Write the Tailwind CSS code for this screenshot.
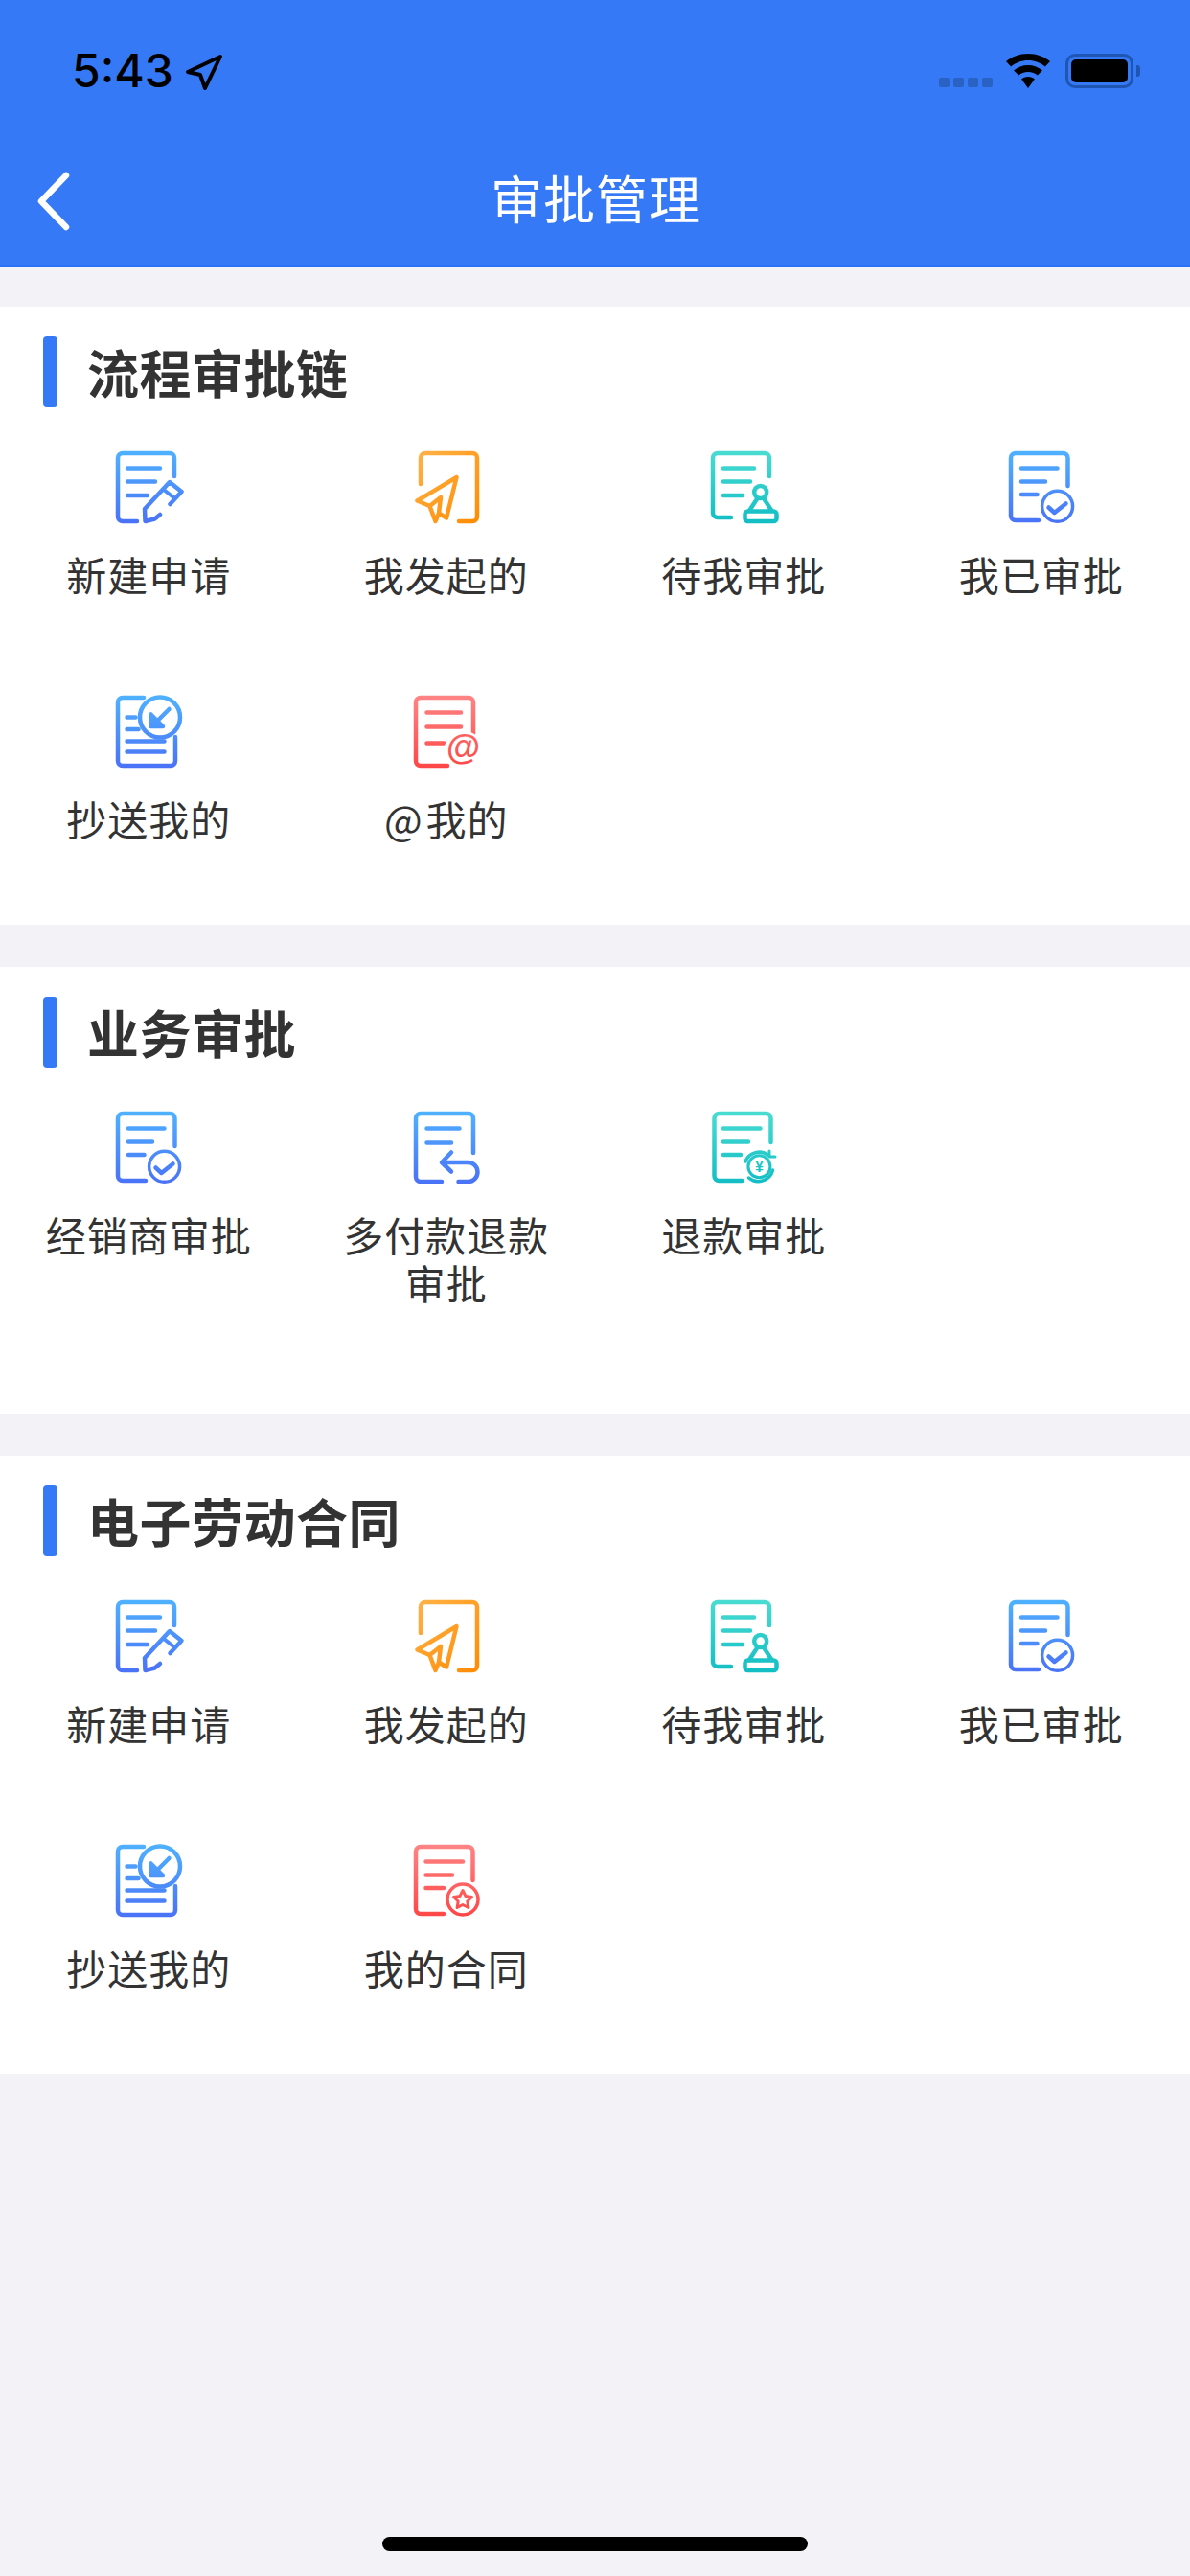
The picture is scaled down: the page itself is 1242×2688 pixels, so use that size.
<!DOCTYPE html>
<html lang="en">
<head>
    <meta charset="UTF-8">
    <meta name="viewport" content="width=device-width, initial-scale=1.0">
    <title>审批管理</title>
    <script src="https://cdn.jsdelivr.net/npm/@tailwindcss/browser@4"></script>
</head>
<body class="relative w-[1242px] h-[2688px] overflow-hidden bg-[#f2f2f7] font-['Noto_Sans_CJK_SC',sans-serif]">

    <!-- Shared gradients and icons -->
    <svg class="absolute w-0 h-0" aria-hidden="true">
        <defs>
            <linearGradient id="blue" gradientUnits="userSpaceOnUse" x1="0" y1="0" x2="0" y2="76"><stop offset="0" stop-color="#4fb2ff"/><stop offset="1" stop-color="#4a72f7"/></linearGradient>
            <linearGradient id="orange" gradientUnits="userSpaceOnUse" x1="0" y1="0" x2="76" y2="76"><stop offset="0" stop-color="#ffb54d"/><stop offset="1" stop-color="#ff8a00"/></linearGradient>
            <linearGradient id="teal" gradientUnits="userSpaceOnUse" x1="0" y1="0" x2="0" y2="76"><stop offset="0" stop-color="#4adcd2"/><stop offset="1" stop-color="#12bec4"/></linearGradient>
            <linearGradient id="red" gradientUnits="userSpaceOnUse" x1="0" y1="0" x2="0" y2="76"><stop offset="0" stop-color="#ff8585"/><stop offset="1" stop-color="#ff4646"/></linearGradient>

            <symbol id="i-new" viewBox="0 0 78 78">
                <g fill="none" stroke="url(#blue)" stroke-width="4.500" stroke-linecap="round" stroke-linejoin="round">
                    <path d="M66 27V8a5 5 0 0 0-5-5H12a5 5 0 0 0-5 5v61a5 5 0 0 0 5 5h15"/>
                    <path d="M17 18.500h34M17 32.500h29M17 47h21"/>
                    <path d="M61.500 56 73.500 43 61 33 35 61l.5 13 10-2.500 5.500-4.500"/>
                    <path d="M55 41l10 8" stroke-width="4"/>
                </g>
            </symbol>
            <symbol id="i-sent" viewBox="0 0 78 78">
                <g fill="none" stroke="url(#orange)" stroke-width="4.500" stroke-linecap="round" stroke-linejoin="round">
                    <path d="M12 35V8a5 5 0 0 1 5-5h49a5 5 0 0 1 5 5v61a5 5 0 0 1-5 5H52"/>
                    <path d="M49.500 28 8.500 52.500 21.500 58 27.500 74 31 65.500 39 70.500Z"/>
                    <path d="M21.500 58 33 49 31 65.500"/>
                </g>
            </symbol>
            <symbol id="i-pending" viewBox="0 0 78 78">
                <g fill="none" stroke="url(#teal)" stroke-width="4.500" stroke-linecap="round" stroke-linejoin="round">
                    <path d="M66 27V8a5 5 0 0 0-5-5H12a5 5 0 0 0-5 5v57a5 5 0 0 0 5 5h14"/>
                    <path d="M18 18.500h32M18 32.500h28M18 47h20"/>
                    <circle cx="56.700" cy="43.500" r="6.500"/>
                    <path d="M53.500 50 45 63M60 50l8.500 13"/>
                    <rect x="40.500" y="63.500" width="33" height="10.500" rx="3"/>
                </g>
            </symbol>
            <symbol id="i-done" viewBox="0 0 78 78">
                <g fill="none" stroke="url(#blue)" stroke-width="4.500" stroke-linecap="round" stroke-linejoin="round">
                    <path d="M66.500 37V8a5 5 0 0 0-5-5H12a5 5 0 0 0-5 5v60a5 5 0 0 0 5 5h24"/>
                    <path d="M18 18.500h37.500M18 32.500h25M18 46h16.500"/>
                    <circle cx="55.600" cy="58.300" r="16" stroke-width="3.500"/>
                    <path d="M46.500 59.500l6 5.500 12-9.500"/>
                </g>
            </symbol>
            <symbol id="i-copy" viewBox="0 0 78 78">
                <g fill="none" stroke="url(#blue)" stroke-width="4.500" stroke-linecap="round" stroke-linejoin="round">
                    <path d="M34 3H12a5 5 0 0 0-5 5v61a5 5 0 0 0 5 5h50a5 5 0 0 0 5-5V44"/>
                    <path d="M16.500 23.500h9M16.500 36h12M16.500 48.500h39M16.500 59.500h39"/>
                    <circle cx="51" cy="23.500" r="21"/>
                    <path d="M60.500 15 46 29.500"/>
                    <path d="M41.500 20.500v12.500h12.500Z" fill="url(#blue)"/>
                </g>
            </symbol>
            <symbol id="i-at" viewBox="0 0 78 78">
                <g fill="none" stroke="url(#red)" stroke-width="4.500" stroke-linecap="round" stroke-linejoin="round">
                    <path d="M67 40V8a5 5 0 0 0-5-5H12a5 5 0 0 0-5 5v61a5 5 0 0 0 5 5h28"/>
                    <path d="M18.500 18.500h35.500M18.500 33.500h35.500M18.500 50.500h18"/>
                    <circle cx="56.600" cy="57.500" r="20" fill="#fff" stroke="none"/>
                </g>
                <text x="56.500" y="67" text-anchor="middle" font-family="Liberation Sans" font-weight="700" font-size="36" fill="url(#red)">@</text>
            </symbol>
            <symbol id="i-return" viewBox="0 0 78 78">
                <g fill="none" stroke="url(#blue)" stroke-width="4.500" stroke-linecap="round" stroke-linejoin="round">
                    <path d="M67 44V8a5 5 0 0 0-5-5H12a5 5 0 0 0-5 5v61a5 5 0 0 0 5 5h22"/>
                    <path d="M18.500 18.500h34M18.500 33.500h25.500"/>
                    <path d="M44 43.500 34 54l10 9.500M34 54h27.500a10 10 0 0 1 0 20H51.500"/>
                </g>
            </symbol>
            <symbol id="i-refund" viewBox="0 0 78 78">
                <g fill="none" stroke="url(#teal)" stroke-width="4.500" stroke-linecap="round" stroke-linejoin="round">
                    <path d="M67.500 33V8a5 5 0 0 0-5-5H13.500a5 5 0 0 0-5 5v60a5 5 0 0 0 5 5h24"/>
                    <path d="M18 18.500h38.500M18 32.500h26M18 46h18"/>
                    <circle cx="55.400" cy="58.300" r="11.500" stroke-width="3"/>
                    <path d="M41 53a15.500 15.500 0 0 1 24-6.500M69.500 62a15.500 15.500 0 0 1-25 8" stroke-width="3.500"/>
                    <path d="M66 42v6h6" stroke-width="3"/>
                </g>
                <text x="55.400" y="64" text-anchor="middle" font-family="Liberation Sans" font-weight="700" font-size="16" fill="url(#teal)">¥</text>
            </symbol>
            <symbol id="i-contract" viewBox="0 0 78 78">
                <g fill="none" stroke="url(#red)" stroke-width="4.500" stroke-linecap="round" stroke-linejoin="round">
                    <path d="M66.500 38V8a5 5 0 0 0-5-5H12a5 5 0 0 0-5 5v60a5 5 0 0 0 5 5h24"/>
                    <path d="M17.500 18.500h38.500M17.500 32.500h27.500M17.500 46h18.500"/>
                    <circle cx="56" cy="58" r="16" stroke-width="3.500"/>
                    <path d="M56 48.500l3 6 6.500 1-4.700 4.500 1.100 6.500-5.900-3-5.900 3 1.100-6.500-4.700-4.500 6.500-1z" stroke-width="3"/>
                </g>
            </symbol>
        </defs>
    </svg>

    <!-- Header -->
    <header class="h-[279px] bg-[#3579f6] border-b-2 border-[#2a72f8] flex flex-col">
        <div class="h-[138px] flex justify-between pl-[75px] pr-[52px] pt-[50px]">
            <div class="flex items-start gap-[12px] h-[48px]">
                <span class="font-['Inter',sans-serif] font-medium text-[48px] leading-[48px] text-black">5:43</span>
                <svg class="w-[40px] h-[40px] mt-[6px]" viewBox="0 0 40 40" fill="none" stroke="#000" stroke-width="4" stroke-linejoin="round"><path d="M3 19 37 3 21 36 16 22Z"/></svg>
            </div>
            <div class="flex items-start">
                <div class="flex gap-[4px] mt-[31px] mr-[14px]">
                    <span class="w-[11px] h-[10px] rounded-[2px] bg-[#2a62c4]"></span>
                    <span class="w-[11px] h-[10px] rounded-[2px] bg-[#2a62c4]"></span>
                    <span class="w-[11px] h-[10px] rounded-[2px] bg-[#2a62c4]"></span>
                    <span class="w-[11px] h-[10px] rounded-[2px] bg-[#2a62c4]"></span>
                </div>
                <svg class="w-[46px] h-[36px] mt-[6px] mr-[16px]" viewBox="0 0 40 36" preserveAspectRatio="none" fill="#000">
                    <path d="M20 0C12 0 5.500 3 0 8l4.500 5.500C8.500 9.500 14 7 20 7s11.500 2.500 15.500 6.500L40 8C34.500 3 28 0 20 0Z"/>
                    <path d="M20 12c-5 0-9.500 2-13 5.500l4.500 5C13.500 20.500 16.500 19 20 19s6.500 1.500 8.500 3.500l4.500-5C29.500 14 25 12 20 12Z"/>
                    <path d="M20 24c-2.500 0-4.500 1-6 2.500L20 36l6-9.500C24.500 25 22.500 24 20 24Z"/>
                </svg>
                <div class="flex items-center mt-[6px]">
                    <div class="w-[71px] h-[36px] rounded-[10px] border-[3px] border-[#1f56b4] p-[3px]">
                        <div class="w-full h-full rounded-[5px] bg-black"></div>
                    </div>
                    <span class="ml-[3px] w-[4px] h-[12px] rounded-r-[3px] bg-[#1f56b4]"></span>
                </div>
            </div>
        </div>
        <div class="relative flex-1 flex items-center justify-center pb-[4px]">
            <svg class="absolute left-[38px] top-[40px] w-[40px] h-[64px]" viewBox="0 0 40 64" fill="none" stroke="#fff" stroke-width="6.500" stroke-linecap="round" stroke-linejoin="round"><path d="M31 5 5 32l26 27"/></svg>
            <h1 class="text-[54px] leading-[64px] text-white tracking-[1px] pl-[2px]">审批管理</h1>
        </div>
    </header>

    <main class="flex flex-col gap-[44px] pt-[41px]">
        <!-- 流程审批链 -->
        <section class="h-[645px] bg-white">
            <div class="h-[150px] flex items-start gap-[31px] pl-[45px] pt-[31px]">
                <span class="w-[15px] h-[74px] rounded-[4px] bg-[#3579f6]"></span>
                <h2 class="text-[54px] leading-[74px] font-bold text-[#333] tracking-[0.5px]">流程审批链</h2>
            </div>
            <div class="grid grid-cols-4 auto-rows-[255px]">
                <div class="flex flex-col items-center px-[30px]"><svg class="w-[78px] h-[78px] shrink-0"><use href="#i-new"/></svg><p class="mt-[26px] text-[42px] leading-[50px] tracking-[1px] text-[#333] text-center">新建申请</p></div>
                <div class="flex flex-col items-center px-[30px]"><svg class="w-[78px] h-[78px] shrink-0"><use href="#i-sent"/></svg><p class="mt-[26px] text-[42px] leading-[50px] tracking-[1px] text-[#333] text-center">我发起的</p></div>
                <div class="flex flex-col items-center px-[30px]"><svg class="w-[78px] h-[78px] shrink-0"><use href="#i-pending"/></svg><p class="mt-[26px] text-[42px] leading-[50px] tracking-[1px] text-[#333] text-center">待我审批</p></div>
                <div class="flex flex-col items-center px-[30px]"><svg class="w-[78px] h-[78px] shrink-0"><use href="#i-done"/></svg><p class="mt-[26px] text-[42px] leading-[50px] tracking-[1px] text-[#333] text-center">我已审批</p></div>
                <div class="flex flex-col items-center px-[30px]"><svg class="w-[78px] h-[78px] shrink-0"><use href="#i-copy"/></svg><p class="mt-[26px] text-[42px] leading-[50px] tracking-[1px] text-[#333] text-center">抄送我的</p></div>
                <div class="flex flex-col items-center px-[30px]"><svg class="w-[78px] h-[78px] shrink-0"><use href="#i-at"/></svg><p class="mt-[26px] text-[42px] leading-[50px] tracking-[1px] text-[#333] text-center"><span class="mr-[3px]">@</span>我的</p></div>
            </div>
        </section>

        <!-- 业务审批 -->
        <section class="h-[466px] bg-white">
            <div class="h-[150px] flex items-start gap-[31px] pl-[45px] pt-[31px]">
                <span class="w-[15px] h-[74px] rounded-[4px] bg-[#3579f6]"></span>
                <h2 class="text-[54px] leading-[74px] font-bold text-[#333] tracking-[0.5px]">业务审批</h2>
            </div>
            <div class="grid grid-cols-4 auto-rows-[255px]">
                <div class="flex flex-col items-center px-[30px]"><svg class="w-[78px] h-[78px] shrink-0"><use href="#i-done"/></svg><p class="mt-[26px] text-[42px] leading-[50px] tracking-[1px] text-[#333] text-center">经销商审批</p></div>
                <div class="flex flex-col items-center px-[30px]"><svg class="w-[78px] h-[78px] shrink-0"><use href="#i-return"/></svg><p class="mt-[26px] text-[42px] leading-[50px] tracking-[1px] text-[#333] text-center">多付款退款审批</p></div>
                <div class="flex flex-col items-center px-[30px]"><svg class="w-[78px] h-[78px] shrink-0"><use href="#i-refund"/></svg><p class="mt-[26px] text-[42px] leading-[50px] tracking-[1px] text-[#333] text-center">退款审批</p></div>
            </div>
        </section>

        <!-- 电子劳动合同 -->
        <section class="h-[645px] bg-white">
            <div class="h-[150px] flex items-start gap-[31px] pl-[45px] pt-[31px]">
                <span class="w-[15px] h-[74px] rounded-[4px] bg-[#3579f6]"></span>
                <h2 class="text-[54px] leading-[74px] font-bold text-[#333] tracking-[0.5px]">电子劳动合同</h2>
            </div>
            <div class="grid grid-cols-4 auto-rows-[255px]">
                <div class="flex flex-col items-center px-[30px]"><svg class="w-[78px] h-[78px] shrink-0"><use href="#i-new"/></svg><p class="mt-[26px] text-[42px] leading-[50px] tracking-[1px] text-[#333] text-center">新建申请</p></div>
                <div class="flex flex-col items-center px-[30px]"><svg class="w-[78px] h-[78px] shrink-0"><use href="#i-sent"/></svg><p class="mt-[26px] text-[42px] leading-[50px] tracking-[1px] text-[#333] text-center">我发起的</p></div>
                <div class="flex flex-col items-center px-[30px]"><svg class="w-[78px] h-[78px] shrink-0"><use href="#i-pending"/></svg><p class="mt-[26px] text-[42px] leading-[50px] tracking-[1px] text-[#333] text-center">待我审批</p></div>
                <div class="flex flex-col items-center px-[30px]"><svg class="w-[78px] h-[78px] shrink-0"><use href="#i-done"/></svg><p class="mt-[26px] text-[42px] leading-[50px] tracking-[1px] text-[#333] text-center">我已审批</p></div>
                <div class="flex flex-col items-center px-[30px]"><svg class="w-[78px] h-[78px] shrink-0"><use href="#i-copy"/></svg><p class="mt-[26px] text-[42px] leading-[50px] tracking-[1px] text-[#333] text-center">抄送我的</p></div>
                <div class="flex flex-col items-center px-[30px]"><svg class="w-[78px] h-[78px] shrink-0"><use href="#i-contract"/></svg><p class="mt-[26px] text-[42px] leading-[50px] tracking-[1px] text-[#333] text-center">我的合同</p></div>
            </div>
        </section>
    </main>

    <!-- Home indicator -->
    <div class="absolute left-[399px] bottom-[26px] w-[444px] h-[15px] rounded-full bg-black"></div>
</body>
</html>
